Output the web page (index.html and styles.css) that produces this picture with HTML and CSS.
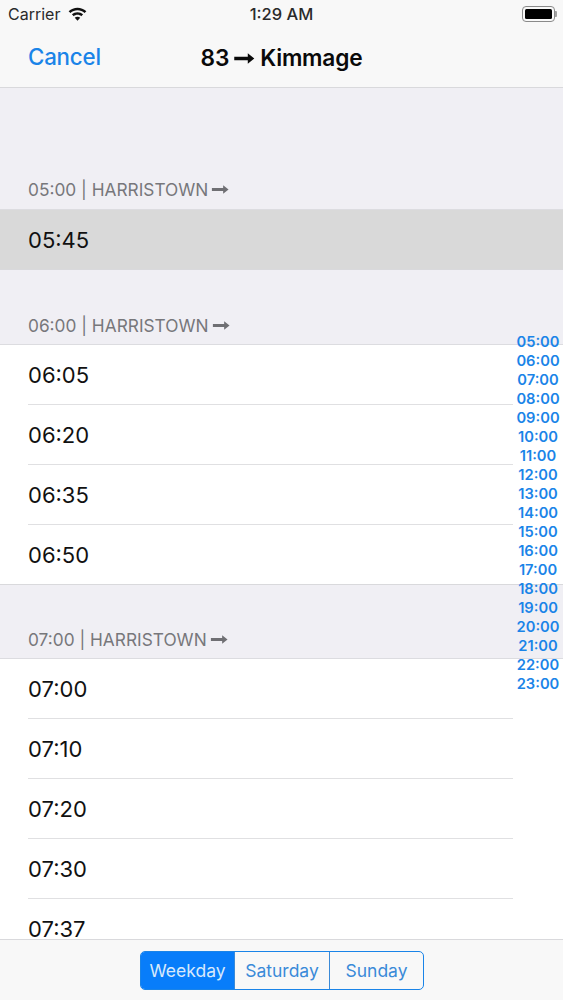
FILE: index.html
```html
<!DOCTYPE html>
<html lang="en">
<head>
<meta charset="utf-8">
<title>83 Kimmage</title>
<link rel="stylesheet" href="styles.css">
</head>
<body>
<div class="screen">
  <header class="top">
    <div class="status">
      <div class="status-left">
        <span>Carrier</span>
        <svg class="wifi" viewBox="0 0 18 13" width="19" height="14"><path d="M9 .5C5.900.5 3 1.700.6 3.800l1.700 1.800C4.200 4 6.500 3 9 3s4.800 1 6.700 2.600l1.700-1.800C15 1.700 12.100.5 9 .5z"/><path d="M9 4.800c-2 0-3.900.700-5.300 2l1.700 1.800C6.400 7.700 7.600 7.200 9 7.200s2.600.500 3.600 1.400l1.700-1.800c-1.400-1.300-3.300-2-5.300-2z"/><path d="M9 9c-1 0-1.900.400-2.600 1L9 12.800l2.600-2.800C10.900 9.400 10 9 9 9z"/></svg>
      </div>
      <span class="clock">1:29 AM</span>
      <div class="battery"><span class="battery-fill"></span></div>
    </div>
    <div class="nav">
      <span class="cancel">Cancel</span>
      <h1 class="title">83<svg class="arrow arrow-title" viewBox="0 0 20 12"><path d="M1 4.300h12.500V1.200L19.500 6l-6 4.800V7.700H1z"/></svg>Kimmage</h1>
    </div>
  </header>

  <main class="list">
    <div class="section-head first"><div class="head-label"><span>05:00 | HARRISTOWN</span><svg class="arrow arrow-head" viewBox="0 0 20 12"><path d="M1 4.300h12.500V1.200L19.500 6l-6 4.800V7.700H1z"/></svg></div></div>
    <div class="group">
      <div class="row selected"><span class="time">05:45</span></div>
    </div>

    <div class="section-head"><div class="head-label"><span>06:00 | HARRISTOWN</span><svg class="arrow arrow-head" viewBox="0 0 20 12"><path d="M1 4.300h12.500V1.200L19.500 6l-6 4.800V7.700H1z"/></svg></div></div>
    <div class="group">
      <div class="row"><span class="time">06:05</span></div>
      <div class="row"><span class="time">06:20</span></div>
      <div class="row"><span class="time">06:35</span></div>
      <div class="row"><span class="time">06:50</span></div>
    </div>

    <div class="section-head tight"><div class="head-label"><span>07:00 | HARRISTOWN</span><svg class="arrow arrow-head" viewBox="0 0 20 12"><path d="M1 4.300h12.500V1.200L19.500 6l-6 4.800V7.700H1z"/></svg></div></div>
    <div class="group">
      <div class="row"><span class="time">07:00</span></div>
      <div class="row"><span class="time">07:10</span></div>
      <div class="row"><span class="time">07:20</span></div>
      <div class="row"><span class="time">07:30</span></div>
      <div class="row"><span class="time">07:37</span></div>
    </div>

    <nav class="index">
      <span>05:00</span><span>06:00</span><span>07:00</span><span>08:00</span><span>09:00</span><span>10:00</span><span>11:00</span><span>12:00</span><span>13:00</span><span>14:00</span><span>15:00</span><span>16:00</span><span>17:00</span><span>18:00</span><span>19:00</span><span>20:00</span><span>21:00</span><span>22:00</span><span>23:00</span>
    </nav>
  </main>

  <footer class="toolbar">
    <div class="segments">
      <span class="seg seg-weekday active">Weekday</span>
      <span class="seg seg-saturday">Saturday</span>
      <span class="seg seg-sunday">Sunday</span>
    </div>
  </footer>
</div>
</body>
</html>
```
FILE: styles.css
```css
* { box-sizing: border-box; }
html, body { margin: 0; padding: 0; }
body { font-family: Inter, "Liberation Sans", sans-serif; background: #f0eff4; }
.screen { width: 563px; height: 1000px; display: flex; flex-direction: column; overflow: hidden; }

.top { height: 88px; flex: none; background: #f8f8f8; border-bottom: 1px solid #d9d9dc; }
.status { height: 29px; display: flex; align-items: center; justify-content: space-between; padding: 0 8px 2px; position: relative; font-size: 16px; color: #2a2a2a; }
.status-left { display: flex; align-items: center; gap: 8px; }
.wifi { fill: #111; }
.clock { position: absolute; left: 0; right: 0; top: 4px; text-align: center; font-size: 16.500px; font-weight: 500; }
.battery { position: relative; width: 33px; height: 16px; border: 1px solid #8a8a8a; border-radius: 4px; padding: 2px; }
.battery::after { content: ""; position: absolute; right: -3px; top: 4px; width: 2px; height: 6px; background: #a0a0a0; border-radius: 0 1px 1px 0; }
.battery-fill { display: block; height: 100%; background: #000; border-radius: 1.500px; }

.nav { height: 58px; display: flex; align-items: center; justify-content: center; position: relative; }
.cancel { position: absolute; left: 28px; top: 15px; font-size: 22.300px; font-weight: 500; color: #1a84e8; line-height: 26px; letter-spacing: -0.200px; }
.title { margin: 0; font-size: 22.700px; font-weight: 600; color: #0a0a0a; display: flex; align-items: center; line-height: 26px; letter-spacing: -0.200px; }
.arrow { display: block; }
.arrow-title { width: 22px; height: 13px; margin: 0 5px 0 4px; fill: #0a0a0a; }
.arrow-head { width: 18px; height: 11px; margin-left: 3px; fill: #6f6f73; }

.list { flex: 1; position: relative; overflow: hidden; background: #f0eff4; }
.section-head { height: 74px; padding: 0 0 8px 28px; display: flex; align-items: flex-end; font-size: 17.300px; line-height: 21px; color: #77777b; }
.section-head.first { height: 121px; padding-bottom: 9px; }
.section-head.tight { height: 73px; }
.head-label { display: flex; align-items: center; }
.section-head + .group { border-top: 1px solid #dcdce0; }
.group { background: #fff; border-bottom: 1px solid #d9d9dc; }
.row { height: 60px; padding-left: 28px; display: flex; align-items: center; }
.row:last-child { height: 59px; }
.row .time { flex: 1; height: 100%; display: flex; align-items: center; margin-right: 50px; font-size: 22px; color: #111; border-bottom: 1px solid #e0e0e2; }
.row:last-child .time { border-bottom: none; }
.row.selected { background: #d9d9d9; }

.index { position: absolute; top: 245px; right: 3px; width: 44px; display: flex; flex-direction: column; align-items: center; font-size: 14.700px; font-weight: 600; line-height: 19px; color: #1a84e8; }

.toolbar { height: 61px; flex: none; background: #f8f8f8; border-top: 1px solid #d9d9dc; display: flex; justify-content: center; align-items: center; padding-left: 1px; }
.segments { display: flex; width: 284px; height: 39px; border: 1px solid #1a84e8; border-radius: 5px; overflow: hidden; }
.seg { display: flex; align-items: center; justify-content: center; font-size: 17.500px; color: #3a8ad8; border-left: 1px solid #3a8ad8; }
.seg-weekday { width: 93px; border-left: none; }
.seg-saturday { width: 95px; }
.seg-sunday { flex: 1; }
.seg.active { background: #087dfa; color: #d8e9fb; }
```
